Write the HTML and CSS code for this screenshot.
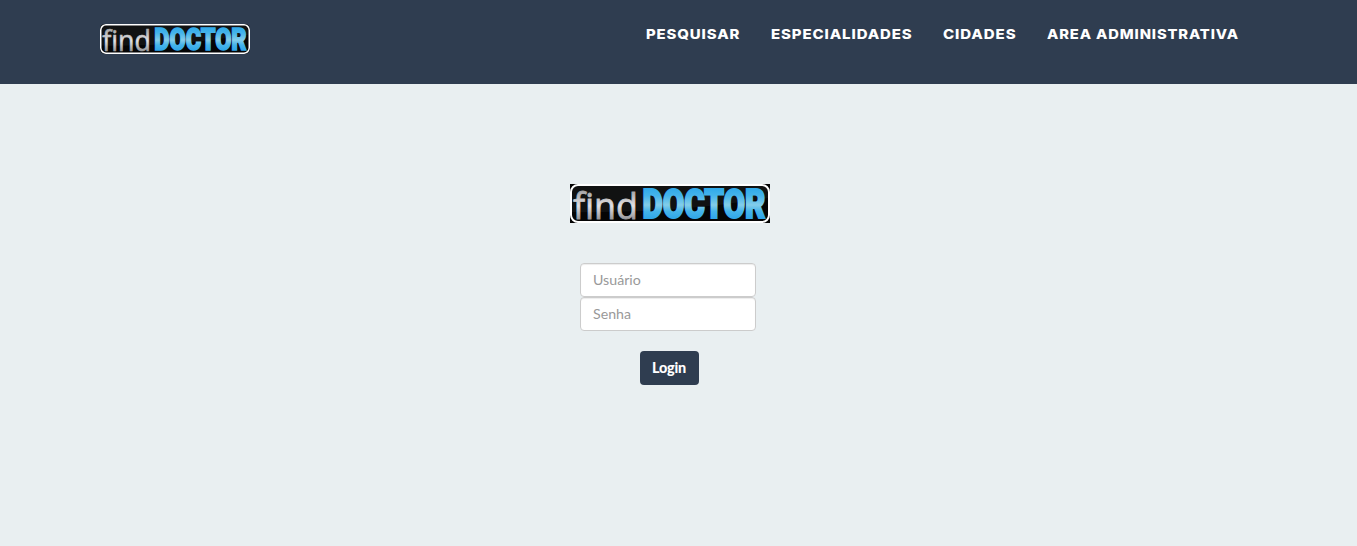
FILE: index.html
```html
<!DOCTYPE html>
<html lang="pt-BR">
<head>
<meta charset="utf-8">
<title>findDOCTOR</title>
<link rel="stylesheet" href="styles.css">
</head>
<body>
<svg class="defs" width="0" height="0" aria-hidden="true">
  <defs>
    <linearGradient id="silver" gradientUnits="userSpaceOnUse" x1="0" y1="6" x2="0" y2="35">
      <stop offset="0" stop-color="#a2a2a4"/><stop offset=".55" stop-color="#e2e2e5"/><stop offset="1" stop-color="#98989b"/>
    </linearGradient>
    <linearGradient id="blue" gradientUnits="userSpaceOnUse" x1="0" y1="4" x2="0" y2="35">
      <stop offset="0" stop-color="#2fa9ea"/><stop offset=".25" stop-color="#45b4ea"/><stop offset=".55" stop-color="#83cdea"/><stop offset=".75" stop-color="#45b4ea"/><stop offset="1" stop-color="#2fa5e8"/>
    </linearGradient>
    <symbol id="logo" viewBox="0 0 200 39" preserveAspectRatio="none">
      <rect width="200" height="39" fill="#050505"/>
      <path d="M2 2h196v12Q100 30 2 28z" fill="#111212"/>
      <rect x="1" y="1" width="198" height="37" rx="7" fill="none" stroke="#fff" stroke-width="2"/>
      <text x="3" y="34.5" class="logo-find" textLength="65" lengthAdjust="spacingAndGlyphs" fill="url(#silver)" stroke="url(#silver)">find</text>
      <text x="72.5" y="34" class="logo-doctor" textLength="123" lengthAdjust="spacingAndGlyphs" fill="url(#blue)" stroke="url(#blue)">DOCTOR</text>
    </symbol>
  </defs>
</svg>
<header class="navbar">
  <a class="brand"><svg class="brand-logo" role="img" aria-label="findDOCTOR"><use href="#logo"/></svg></a>
  <nav class="menu">
    <a class="item search">PESQUISAR</a>
    <a class="item specialties">ESPECIALIDADES</a>
    <a class="item cities">CIDADES</a>
    <a class="item admin">AREA ADMINISTRATIVA</a>
  </nav>
</header>
<main class="login">
  <svg class="login-logo" role="img" aria-label="findDOCTOR"><use href="#logo"/></svg>
  <form class="form">
    <input class="field" type="text" placeholder="Usuário">
    <input class="field" type="password" placeholder="Senha">
    <button class="submit" type="button">Login</button>
  </form>
</main>
</body>
</html>
```
FILE: styles.css
```css
* { box-sizing: border-box; }
body { margin: 0; min-height: 546px; background: #e9eff1; font-family: Lato, sans-serif; }
.defs { display: block; height: 0; }
.navbar { display: flex; justify-content: space-between; height: 84px; padding: 24px 118px 0 100px; background: #2f3d50; }
.brand { width: 150px; height: 30px; border-radius: 5px; overflow: hidden; }
.brand-logo { display: block; width: 150px; height: 30px; }
.menu { display: flex; gap: 30px; }
.item { height: 20px; color: #fff; font: 800 13.5px/20px Inter, sans-serif; letter-spacing: .8px; white-space: nowrap; transform-origin: left center; }
.search { width: 95px; transform: scaleX(1.105); }
.specialties { width: 142px; transform: scaleX(1.11); }
.cities { width: 74px; transform: scaleX(1.115); }
.admin { width: 192px; transform: scaleX(1.092); }
.logo-find { font: 400 37px "Open Sans", sans-serif; stroke-width: .8px; }
.logo-doctor { font: 900 41.5px Roboto, sans-serif; stroke-width: 2.2px; }
.login { padding-top: 100px; }
.login-logo { display: block; width: 200px; height: 39px; margin-left: 570px; }
.form { display: flex; flex-direction: column; width: 176px; margin: 40px 0 0 580px; }
.field { width: 176px; height: 34px; padding: 5px 12px 7px; border: 1px solid #ccc; border-radius: 4px; background: #fff; box-shadow: inset 0 1px 1px rgba(0,0,0,.075); font: 14.2px/20px Lato, sans-serif; color: #555; }
.field::placeholder { color: #999; opacity: 1; }
.submit { width: 59px; height: 34px; margin: 20px 0 0 60px; padding: 0 1px 1px 0; border: 0; border-radius: 4px; background: #2f3d50; color: #fff; font: 900 14.4px/20px Lato, sans-serif; letter-spacing: -.2px; }
```
